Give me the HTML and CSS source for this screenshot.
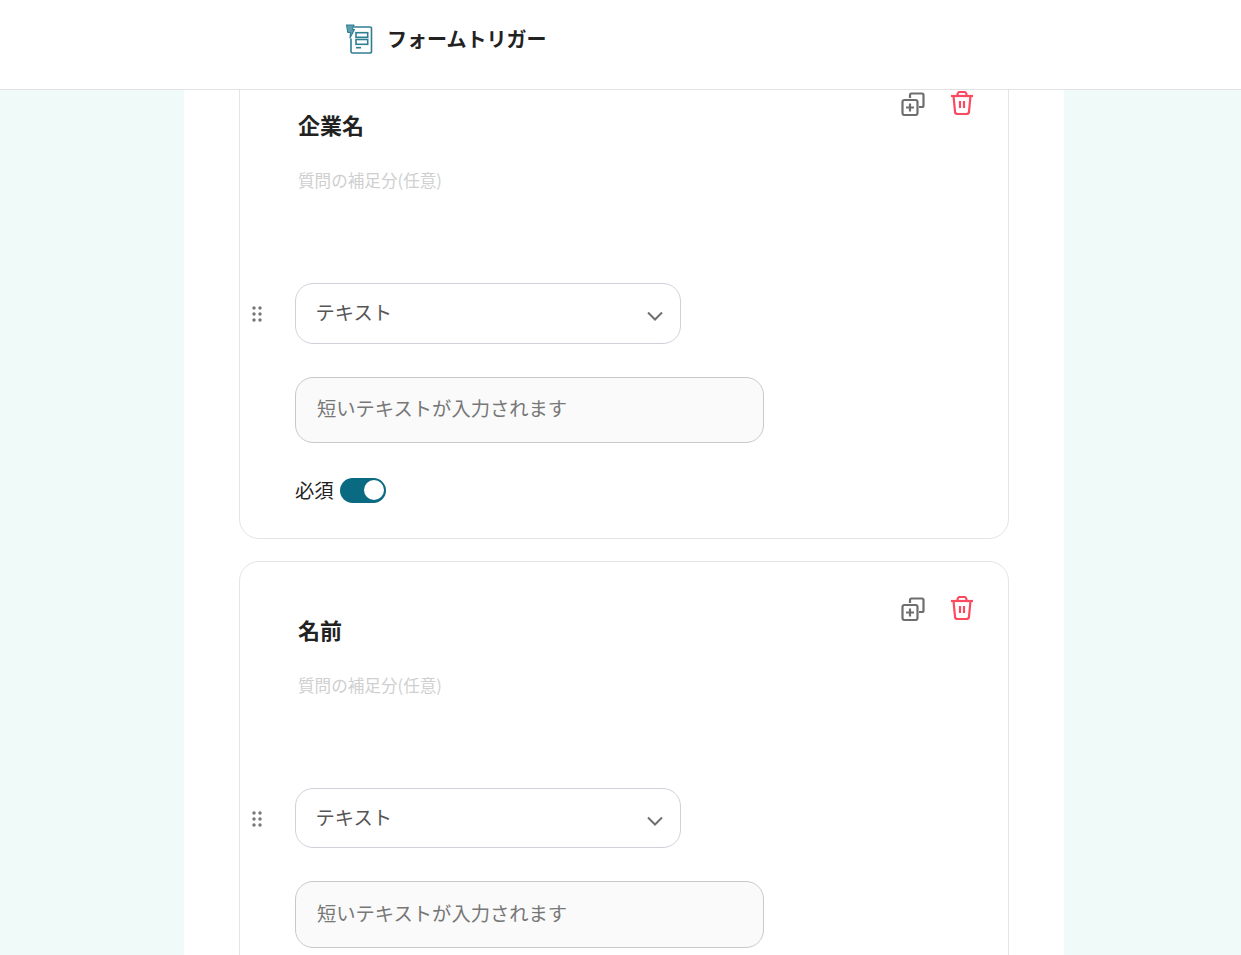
FILE: index.html
```html
<!DOCTYPE html>
<html lang="ja">
<head>
<meta charset="utf-8">
<title>フォームトリガー</title>
<link rel="stylesheet" href="styles.css">
</head>
<body>
<header class="topbar">
  <svg class="logo" width="28" height="32" viewBox="0 0 28 32" fill="none" stroke="#2f7f93" stroke-width="1.600">
    <path d="M9 4H25a1.500 1.500 0 0 1 1.500 1.500V28.500A1.500 1.500 0 0 1 25 30H7.500A1.500 1.500 0 0 1 6 28.500V15.500"/>
    <path d="M1.500 2H9L7.300 6.500H9.500L5 15L5.500 9.500H2.800Z" fill="#5f9fb0" stroke-width="1.100" stroke-linejoin="round"/>
    <rect x="11" y="9.700" width="11.700" height="4.600"/>
    <rect x="11" y="16.500" width="11.700" height="4.800"/>
    <path d="M11 24.700H16"/>
  </svg>
  <h1 class="page-title">フォームトリガー</h1>
</header>
<main class="stage">
  <div class="panel">
    <section class="card card-first">
      <div class="card-tools">
        <svg class="icon-copy" width="24" height="24" viewBox="0 0 24 24" fill="none" stroke="#6e6e6e" stroke-width="2.200"><path d="M9 6V3a1.500 1.500 0 0 1 1.500-1.500H21A1.500 1.500 0 0 1 22.500 3V13.500A1.500 1.500 0 0 1 21 15H18"/><rect x="1.500" y="8" width="15" height="15" rx="2"/><path d="M9 11.500V19.500M5 15.500H13"/></svg>
        <svg class="icon-trash" width="24" height="24" viewBox="0 0 24 24" fill="none" stroke="#fb4a5f" stroke-width="2.200" stroke-linejoin="round"><path d="M1 5H23"/><path d="M7.500 5V3.500A2.500 2.500 0 0 1 10 1H14A2.500 2.500 0 0 1 16.500 3.500V5"/><path d="M3.500 5L5 20.500A2.500 2.500 0 0 0 7.500 23H16.500A2.500 2.500 0 0 0 19 20.500L20.500 5"/><path d="M10 10V17M14 10V17"/></svg>
      </div>
      <h2 class="field-title">企業名</h2>
      <p class="field-help">質問の補足分(任意)</p>
      <div class="select-row">
        <svg class="grip" width="10" height="16" viewBox="0 0 10 16" fill="#777"><circle cx="2" cy="2" r="1.700"/><circle cx="8" cy="2" r="1.700"/><circle cx="2" cy="8" r="1.700"/><circle cx="8" cy="8" r="1.700"/><circle cx="2" cy="14" r="1.700"/><circle cx="8" cy="14" r="1.700"/></svg>
        <div class="select"><span class="select-text">テキスト</span>
          <svg width="16" height="10" viewBox="0 0 16 10" fill="none" stroke="#6f6f6f" stroke-width="2"><path d="M1 1.500L8 8.500L15 1.500"/></svg>
        </div>
      </div>
      <div class="input">短いテキストが入力されます</div>
      <div class="required"><span>必須</span><span class="toggle"><span class="knob"></span></span></div>
    </section>
    <section class="card">
      <div class="card-tools">
        <svg class="icon-copy" width="24" height="24" viewBox="0 0 24 24" fill="none" stroke="#6e6e6e" stroke-width="2.200"><path d="M9 6V3a1.500 1.500 0 0 1 1.500-1.500H21A1.500 1.500 0 0 1 22.500 3V13.500A1.500 1.500 0 0 1 21 15H18"/><rect x="1.500" y="8" width="15" height="15" rx="2"/><path d="M9 11.500V19.500M5 15.500H13"/></svg>
        <svg class="icon-trash" width="24" height="24" viewBox="0 0 24 24" fill="none" stroke="#fb4a5f" stroke-width="2.200" stroke-linejoin="round"><path d="M1 5H23"/><path d="M7.500 5V3.500A2.500 2.500 0 0 1 10 1H14A2.500 2.500 0 0 1 16.500 3.500V5"/><path d="M3.500 5L5 20.500A2.500 2.500 0 0 0 7.500 23H16.500A2.500 2.500 0 0 0 19 20.500L20.500 5"/><path d="M10 10V17M14 10V17"/></svg>
      </div>
      <h2 class="field-title">名前</h2>
      <p class="field-help">質問の補足分(任意)</p>
      <div class="select-row">
        <svg class="grip" width="10" height="16" viewBox="0 0 10 16" fill="#777"><circle cx="2" cy="2" r="1.700"/><circle cx="8" cy="2" r="1.700"/><circle cx="2" cy="8" r="1.700"/><circle cx="8" cy="8" r="1.700"/><circle cx="2" cy="14" r="1.700"/><circle cx="8" cy="14" r="1.700"/></svg>
        <div class="select"><span class="select-text">テキスト</span>
          <svg width="16" height="10" viewBox="0 0 16 10" fill="none" stroke="#6f6f6f" stroke-width="2"><path d="M1 1.500L8 8.500L15 1.500"/></svg>
        </div>
      </div>
      <div class="input">短いテキストが入力されます</div>
    </section>
  </div>
</main>
</body>
</html>
```
FILE: styles.css
```css
* { box-sizing: border-box; }
html, body { margin: 0; height: 955px; overflow: hidden; }
body {
  background: #f0faf8;
  color: #222;
  font-family: "Noto Sans CJK JP", "Noto Sans", sans-serif;
}
.topbar {
  height: 90px;
  background: #fff;
  border-bottom: 1px solid #e2e2e2;
  display: flex;
  align-items: flex-start;
  padding: 23px 0 0 345px;
  gap: 14px;
  position: relative;
  z-index: 2;
}
.logo { flex: none; }
.page-title {
  margin: 0;
  font-size: 20px;
  line-height: 31px;
  font-weight: 700;
  color: #222;
}
.stage { height: 865px; overflow: hidden; }
.panel {
  display: flow-root;
  width: 880px;
  height: 100%;
  margin-left: 184px;
  background: #fff;
  padding: 0 55px;
}
.card {
  position: relative;
  height: 482.600px;
  margin-bottom: 22px;
  border: 1px solid #e4e4e4;
  border-radius: 20px;
  padding: 0 0 0 55px;
  background: #fff;
}
.card-first { margin-top: -33.600px; }
.card-tools {
  position: absolute;
  top: 34px;
  right: 34px;
  display: flex;
  align-items: flex-start;
  gap: 25px;
}
.icon-copy { margin-top: 0.600px; }
.field-title {
  margin: 0;
  padding: 51px 0 0 3px;
  font-size: 22px;
  line-height: 32px;
  font-weight: 700;
  color: #222;
}
.field-help {
  margin: 0;
  padding: 28px 0 0 3px;
  height: 143px;
  font-size: 16.600px;
  line-height: 24px;
  color: #cfcfcf;
}
.select-row { position: relative; }
.grip { position: absolute; left: -42.700px; top: 23px; }
.select {
  width: 386px;
  height: 60.200px;
  border: 1px solid #cfd2d8;
  border-radius: 18px;
  padding: 0 17px 0 19.500px;
  display: flex;
  align-items: center;
  justify-content: space-between;
  font-size: 19.300px;
  color: #555;
}
.select-text { margin-bottom: 3px; }
.select svg { margin-top: 5px; }
.input {
  width: 469px;
  height: 66.400px;
  margin-top: 33px;
  border: 1px solid #c9c9c9;
  border-radius: 18px;
  background: #fafafa;
  padding: 0 21px 3px;
  display: flex;
  align-items: center;
  font-size: 19.300px;
  color: #777;
}
.required {
  margin-top: 34px;
  display: flex;
  align-items: center;
  gap: 6px;
  font-size: 19.300px;
  line-height: 26px;
  color: #222;
}
.toggle {
  width: 46px;
  height: 25px;
  margin-top: 1px;
  border-radius: 13px;
  background: #0a6a82;
  display: flex;
  align-items: center;
  justify-content: flex-end;
  padding-right: 2px;
}
.knob { width: 20px; height: 20px; border-radius: 50%; background: #fff; }
```
